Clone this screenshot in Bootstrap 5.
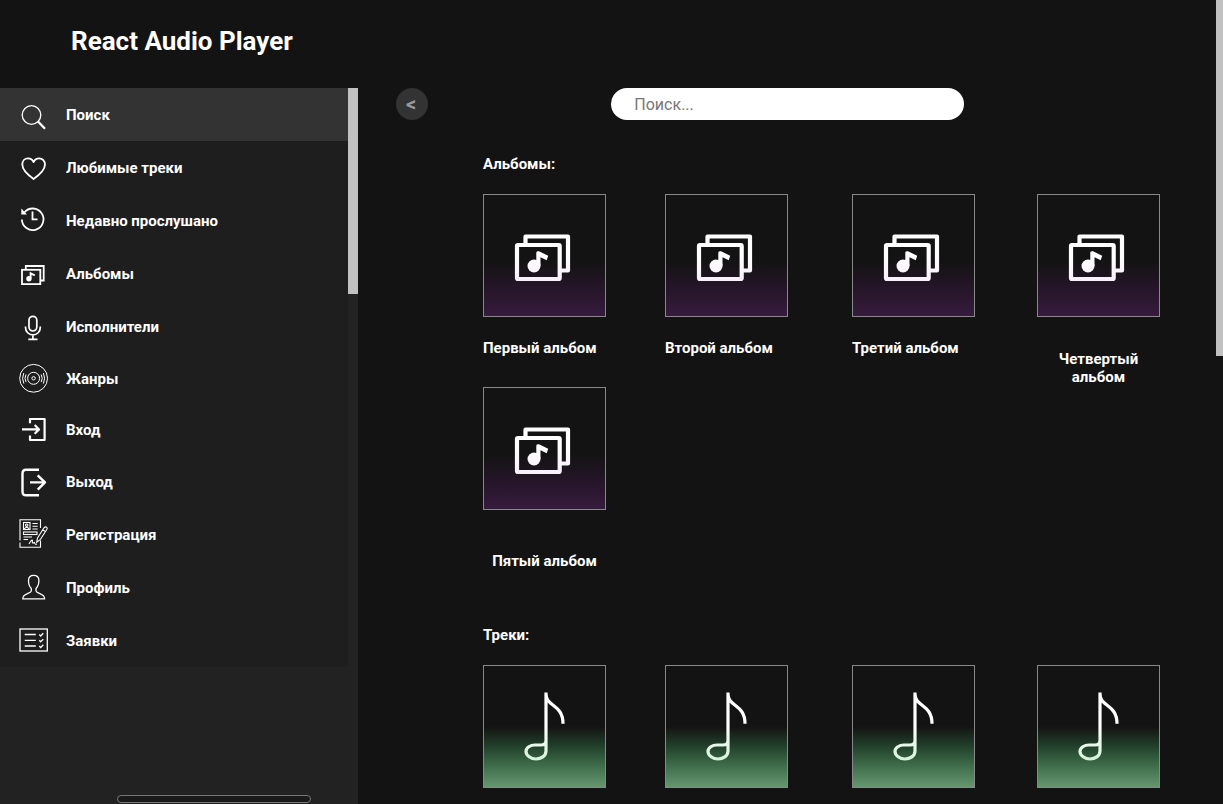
<!DOCTYPE html>
<html lang="ru">
<head>
<meta charset="utf-8">
<meta name="viewport" content="width=device-width, initial-scale=1">
<title>React Audio Player</title>
<link rel="stylesheet" href="https://cdn.jsdelivr.net/npm/bootstrap@5.3.0/dist/css/bootstrap.min.css">
<style>
  body { background: #131313; color: #fff; font-family: Roboto, sans-serif; font-size: 15px; font-weight: 700; line-height: 18px; }
  .app-shell, .app-body { min-width: 0; min-height: 0; }
  .app-header { height: 88px; padding: 4px 71px 10px; }
  .app-title { font-size: 26px; line-height: 30px; font-weight: 700; }
  .sidebar { width: 358px; background: #222; }
  .menu-list { width: 348px; background: #1e1e1e; }
  .menu-list a { height: 53px; padding-left: 18px; gap: 16px; color: #fff; text-decoration: none; }
  .menu-list a.short { height: 51px; }
  .menu-list a.active, .menu-list a:hover { background: #333; }
  .menu-list svg { width: 32px; height: 33px; flex: none; fill: none; stroke: #fff; stroke-width: 2; }
  .side-thumb { width: 10px; height: 206px; background: #c1c1c1; }
  .bottom-bar { width: 194px; height: 8px; margin: auto 0 1px 117px; border: 1px solid #777; border-radius: 4px; background: #1a1a1a; }
  .page-thumb { width: 7px; height: 356px; background: #c1c1c1; }
  .search-row { display: grid; grid-template-columns: 1fr 45% 1fr; padding: 0 37px 0 38px; }
  .back-btn { width: 32px; height: 32px; border: 0; border-radius: 50%; background: #333; color: #999; font-size: 20px; font-weight: 700; line-height: 32px; padding: 0 2px 0 0; }
  .search-box { width: 100%; height: 32px; border: 0; border-radius: 16px; padding: 0 23px; font-size: 16px; font-weight: 400; }
  .search-box::placeholder { color: #777; opacity: 1; }
  .content { padding: 0 56px 0 125px; }
  .content h2 { font-size: 15px; line-height: 18px; font-weight: 700; margin: 0; }
  .albums-title { padding-top: 35px; }
  .tracks-title { padding-top: 56px; }
  .tile-grid { display: grid; grid-template-columns: 182fr 187fr 185fr 123px; row-gap: 1px; margin-top: 21px; }
  .tile-item { width: 123px; color: #fff; text-decoration: none; }
  .tile { display: block; width: 123px; height: 123px; border: 1px solid #888; }
  .tile svg { display: block; width: 121px; height: 121px; fill: none; }
  .tile.album { background: linear-gradient(#131313 55%, #241527 75%, #361b3d); }
  .tile.track { background: linear-gradient(#131313 50%, #22422c 67%, #3e6c4a 82%, #65976f); }
  .caption { display: block; margin-top: 22px; white-space: nowrap; }
  .caption.wrapped { margin-top: 33px; padding: 0 16px; text-align: center; white-space: normal; }
  .caption.lowered { margin-top: 42px; text-align: center; }
</style>
</head>
<body class="vh-100 overflow-hidden d-flex">
<svg width="0" height="0" class="position-absolute" aria-hidden="true">
  <defs>
    <linearGradient id="tint-album" gradientUnits="userSpaceOnUse" x1="0" y1="60" x2="0" y2="87"><stop stop-color="#fff"/><stop offset="1" stop-color="#f8effb"/></linearGradient>
    <linearGradient id="tint-track" gradientUnits="userSpaceOnUse" x1="0" y1="60" x2="0" y2="95"><stop stop-color="#fff"/><stop offset="1" stop-color="#d6f2da"/></linearGradient>
    <symbol id="ico-album" viewBox="1 1 121 121">
      <path d="M42.500 49V42.500H85V76.500H78" stroke="url(#tint-album)" stroke-width="4.200" stroke-linejoin="round"/>
      <rect x="34" y="51" width="42.700" height="34" rx="1" stroke="url(#tint-album)" stroke-width="4.200"/>
      <circle cx="51" cy="72" r="6.500" fill="url(#tint-album)"/>
      <path d="M53.300 72V58.500Q53.800 56.700 56 57.300L65.200 61.800 63.700 66.300 57.500 63.300V72Z" fill="url(#tint-album)"/>
    </symbol>
    <symbol id="ico-note" viewBox="1 1 121 121">
      <path d="M63 27.500V86C63 91 58 94 53 94S43 90.500 43 86.500 47.500 80 52 80H58C61 80 63 78.500 63 75.500M63 29C63 42 80 39 80 58.700" stroke="url(#tint-track)" stroke-width="3.200"/>
    </symbol>
  </defs>
</svg>

<div class="app-shell flex-grow-1 d-flex flex-column">
  <header class="app-header d-flex align-items-center flex-shrink-0"><h1 class="app-title m-0">React Audio Player</h1></header>
  <div class="app-body d-flex flex-grow-1">
    <aside class="sidebar d-flex flex-column flex-shrink-0">
      <div class="d-flex align-items-start">
        <nav class="menu-list" aria-label="Меню">
          <a class="active d-flex align-items-center" href="#"><svg viewBox="0 0 32 33"><circle cx="13.500" cy="17" r="9.300" stroke-width="1.300"/><path d="M20 23.500 27 30.800" stroke-width="2.300"/></svg>Поиск</a>
          <a class="d-flex align-items-center" href="#"><svg viewBox="0 0 32 33"><path d="M15.600 28C10 24 4.300 19 4.300 13.500 4.300 10 6.700 7.300 10 7.300 12.600 7.300 14.500 8.700 15.600 11 16.700 8.700 18.600 7.300 21.200 7.300 24.500 7.300 27 10 27 13.500 27 19 21.200 24 15.600 28Z" stroke-width="1.800" stroke-linejoin="round"/></svg>Любимые треки</a>
          <a class="d-flex align-items-center" href="#"><svg viewBox="0 0 32 33"><path d="M3.900 15.500A10.800 10.800 0 1 0 6.300 8.500M14.500 7.500V15.300H19.500" stroke-width="1.800"/><path d="M3.300 4.600V10.500H9Z" fill="#fff" stroke="none"/></svg>Недавно прослушано</a>
          <a class="d-flex align-items-center" href="#"><svg viewBox="0 0 32 33"><path d="M7.800 12.500V9H25.700V23.500H22" stroke-width="1.800"/><rect x="4" y="12.800" width="18.300" height="14.300" stroke-width="1.800"/><circle cx="10.900" cy="21.700" r="2.700" fill="#fff" stroke="none"/><path d="M12.600 21.500V16.300L16.800 18.300" stroke-width="1.900"/></svg>Альбомы</a>
          <a class="d-flex align-items-center" href="#"><svg viewBox="0 0 32 33"><rect x="11" y="6.300" width="7.800" height="14.700" rx="3.900" stroke-width="1.700"/><path d="M7.500 16.500V17.500A7.400 7.400 0 0 0 22.300 17.500V16.500M14.900 25V29M10.300 29.300H19.500" stroke-width="1.700"/></svg>Исполнители</a>
          <a class="short d-flex align-items-center" href="#"><svg viewBox="0 0 32 33"><g stroke-width="1"><circle cx="15.600" cy="16.300" r="13.900"/><circle cx="15.600" cy="16.300" r="6"/><circle cx="15.600" cy="16.300" r="1.700"/><path d="M8 12.500Q6 16.300 8 20.100M5.800 11Q3.400 16.300 5.800 21.600M23.200 12.500Q25.200 16.300 23.200 20.100M25.400 11Q27.800 16.300 25.400 21.600"/></g></svg>Жанры</a>
          <a class="short d-flex align-items-center" href="#"><svg viewBox="0 0 32 33"><path d="M12 10.300V6H26.600V27H12V22.500M4 16.400H21M16.700 12 21 16.400 16.700 20.800" stroke-width="2.200" stroke-linejoin="round"/></svg>Вход</a>
          <a class="d-flex align-items-center" href="#"><svg viewBox="0 0 32 33"><path d="M21 4.700H8Q4.500 4.700 4.500 8.500V26.500Q4.500 30.300 8 30.300H21M12 17.400H27M19.700 10.300 27 17.400 19.700 24.600" stroke-width="2.400" stroke-linejoin="round"/></svg>Выход</a>
          <a class="d-flex align-items-center" href="#"><svg viewBox="0 0 32 33"><g stroke-width="1.100"><path d="M22.500 10V1.800H2V22.500M2 24.500V29.200H22.500V22.500"/><rect x="5.500" y="4.500" width="6.500" height="7"/><circle cx="8.700" cy="7.200" r="1.200"/><path d="M6.300 11Q8.700 7.500 11.200 11M14.500 5.500H19.700M14.500 8.200H19.700M14.500 11H19.700"/><rect x="5.500" y="14" width="13.500" height="2.500"/><path d="M5.500 19H14M5.500 21.500H10M11 26Q14 20.500 14.500 22.500 13.500 26 16.500 24.500 17 27 19 26"/><path d="M19.500 20 26 9.800Q27.300 8.300 28.800 9.400 29.700 10.300 28.800 11.500L22.200 21.700 18.700 24.300ZM24.800 11.800 27.400 13.600"/></g></svg>Регистрация</a>
          <a class="d-flex align-items-center" href="#"><svg viewBox="0 0 32 33"><path d="M15.700 4.300C12.500 4.300 10.500 6.500 10.500 9.500 10.500 13 11.300 15.600 13.300 17.500V20C13 22 8 22.500 5.700 25 5 26 4.800 26.800 4.800 27.900H26.600C26.600 26.800 26.300 26 25.600 25 23.300 22.500 18.300 22 18 20V17.500C20 15.600 20.900 13 20.900 9.500 20.900 6.500 18.900 4.300 15.700 4.300Z" stroke-width="1.300"/></svg>Профиль</a>
          <a class="d-flex align-items-center" href="#"><svg viewBox="0 0 32 33"><rect x="2" y="5" width="27.300" height="22" stroke-width="1.300"/><path d="M6.700 10.500H17.800M6.700 16.300H17.800M6.700 22H17.800M21.300 10.500 22.700 12 25.300 9.300M21.300 16.300 22.700 17.800 25.300 15.100M21.300 22 22.700 23.500 25.300 20.800" stroke-width="1.300"/></svg>Заявки</a>
        </nav>
        <div class="side-thumb"></div>
      </div>
      <div class="bottom-bar"></div>
    </aside>

    <main class="flex-grow-1 overflow-hidden">
      <div class="search-row">
        <button class="back-btn" type="button" aria-label="Назад">&lt;</button>
        <input class="search-box" type="search" placeholder="Поиск..." aria-label="Поиск">
      </div>
      <div class="content">
        <section>
          <h2 class="albums-title">Альбомы:</h2>
          <div class="tile-grid">
            <a class="tile-item" href="#"><span class="tile album"><svg><use href="#ico-album"/></svg></span><span class="caption">Первый альбом</span></a>
            <a class="tile-item" href="#"><span class="tile album"><svg><use href="#ico-album"/></svg></span><span class="caption">Второй альбом</span></a>
            <a class="tile-item" href="#"><span class="tile album"><svg><use href="#ico-album"/></svg></span><span class="caption">Третий альбом</span></a>
            <a class="tile-item" href="#"><span class="tile album"><svg><use href="#ico-album"/></svg></span><span class="caption wrapped">Четвертый альбом</span></a>
            <a class="tile-item" href="#"><span class="tile album"><svg><use href="#ico-album"/></svg></span><span class="caption lowered">Пятый альбом</span></a>
          </div>
        </section>
        <section>
          <h2 class="tracks-title">Треки:</h2>
          <div class="tile-grid">
            <a class="tile-item" href="#" aria-label="Трек 1"><span class="tile track"><svg><use href="#ico-note"/></svg></span></a>
            <a class="tile-item" href="#" aria-label="Трек 2"><span class="tile track"><svg><use href="#ico-note"/></svg></span></a>
            <a class="tile-item" href="#" aria-label="Трек 3"><span class="tile track"><svg><use href="#ico-note"/></svg></span></a>
            <a class="tile-item" href="#" aria-label="Трек 4"><span class="tile track"><svg><use href="#ico-note"/></svg></span></a>
          </div>
        </section>
      </div>
    </main>
  </div>
</div>
<div class="page-thumb flex-shrink-0"></div>
<script src="https://cdn.jsdelivr.net/npm/bootstrap@5.3.0/dist/js/bootstrap.bundle.min.js"></script>
</body>
</html>
